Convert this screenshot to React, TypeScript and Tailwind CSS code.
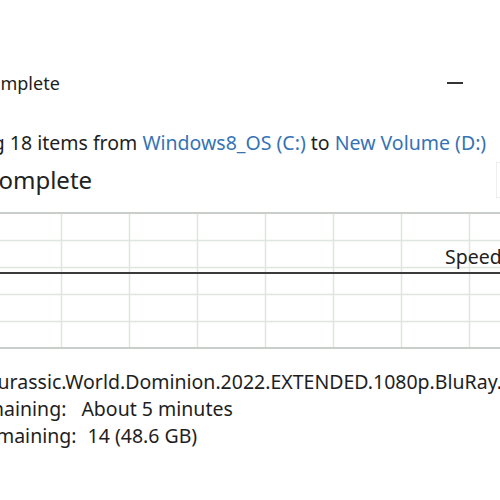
const font = { fontFamily: '"Noto Sans", "Open Sans", sans-serif' };

const Graph = () => {
  const cols = [61, 129, 197, 265, 333, 401, 469];
  const rows = [28, 55, 82, 109];
  return (
    <div className="relative h-[137px] w-full">
      <svg width="500" height="137" className="block">
        <rect x="0" y="0" width="500" height="137" fill="#ffffff" />
        {rows.map((y) => (
          <line key={y} x1="0" x2="500" y1={y + 0.5} y2={y + 0.5} stroke="#dde6df" strokeWidth="1.5" />
        ))}
        {cols.map((x) => (
          <line key={x} x1={x + 0.5} x2={x + 0.5} y1="0" y2="137" stroke="#dde6df" strokeWidth="1.5" />
        ))}
        <line x1="0" x2="500" y1="1" y2="1" stroke="#c9cecb" strokeWidth="2" />
        <line x1="0" x2="500" y1="136" y2="136" stroke="#c9cecb" strokeWidth="2" />
        <line x1="0" x2="500" y1="61" y2="61" stroke="#3a3a3a" strokeWidth="2" />
      </svg>
      {/* speed label sits over the chart */}
      <span className="absolute left-[445px] top-[32px] whitespace-nowrap text-[19.5px] leading-[26px] text-[#222]">
        Speed: 0 bytes/s
      </span>
    </div>
  );
};

export default function App() {
  return (
    <div className="h-[500px] w-[500px] overflow-hidden bg-white text-[#1e1e1e]" style={font}>
      {/* Title bar */}
      <div className="mt-[68px] flex h-[30px] items-center justify-between">
        <span className="ml-[-49px] whitespace-nowrap text-[18px]">2% complete</span>
        <div className="mr-[37px] h-[2px] w-[16px] bg-[#333]" />
      </div>

      {/* Copying line */}
      <div className="mt-[33px] flex h-[24px] items-center whitespace-nowrap text-[19.5px] leading-[24px]">
        <span className="ml-[-70px]">
          Copying 18 items from <span className="text-[#3573b5]">Windows8_OS (C:)</span> to{" "}
          <span className="text-[#3573b5]">New Volume (D:)</span>
        </span>
      </div>

      {/* Heading */}
      <div className="mt-[8px] flex h-[34px] items-center justify-between">
        <span className="ml-[-53px] whitespace-nowrap text-[24px] text-[#222]">2% complete</span>
        <div className="mr-[-36px] h-[36px] w-[40px] shrink-0 border border-[#eeeeee]" />
      </div>

      <div className="mt-[15px]">
        <Graph />
      </div>

      {/* Details */}
      <div className="ml-[-80px] mt-[19px] flex flex-col whitespace-nowrap text-[19.5px]">
        <div className="h-[27px] leading-[27px]">
          Name:<span className="ml-[12px]">Jurassic.World.Dominion.2022.EXTENDED.1080p.BluRay.x264.mkv</span>
        </div>
        <div className="ml-[-3px] h-[27px] leading-[27px]">
          Time remaining:<span className="ml-[15px]">About 5 minutes</span>
        </div>
        <div className="h-[27px] leading-[27px]">
          Items remaining:<span className="ml-[11px]">14 (48.6 GB)</span>
        </div>
      </div>
    </div>
  );
}
